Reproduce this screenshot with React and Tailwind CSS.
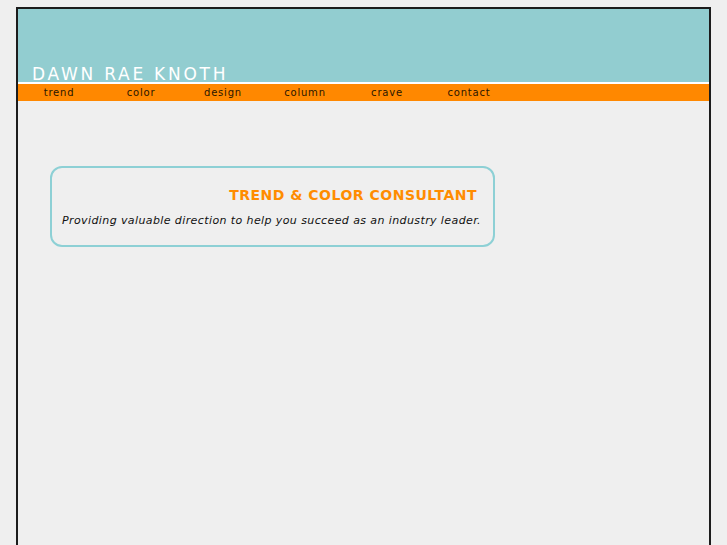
import React from 'react';

const navItems = ['trend', 'color', 'design', 'column', 'crave', 'contact'];

const App = () => {
  return (
    <div className="min-h-[545px] bg-[#efefef] pt-[7px] pl-[16px] font-['DejaVu_Sans',sans-serif]">
      <div className="w-[695px] min-h-[540px] border-2 border-b-0 border-[#1c1c1c] bg-[#efefef]">
        {/* Header */}
        <div className="h-[73px] bg-[#92cdd0] flex items-end pl-[14px]">
          <h1 className="text-white text-[17px] leading-none tracking-[2.75px] font-normal mb-[-1px]">
            DAWN RAE KNOTH
          </h1>
        </div>
        <div className="h-[2px] bg-white" />

        {/* Nav */}
        <nav className="h-[17px] bg-[#ff8800] flex items-center">
          {navItems.map((item) => (
            <a
              key={item}
              href="#"
              className="w-[82px] text-center text-[10px] leading-none tracking-[0.8px] text-[#2a1600]"
            >
              {item}
            </a>
          ))}
        </nav>

        {/* Intro box */}
        <div className="pt-[65px] pl-[32px]">
          <div className="w-[445px] h-[81px] border-2 border-[#8dd0d5] rounded-[12px] pt-[20px] pr-[16px] pl-[10px]">
            <h2 className="text-right text-[14px] leading-none font-bold tracking-[0.5px] text-[#ff8c00]">
              TREND &amp; COLOR CONSULTANT
            </h2>
            <p className="mt-[13px] mr-[-4px] text-right whitespace-nowrap text-[11px] leading-none italic tracking-[0.4px] text-[#111]">
              Providing valuable direction to help you succeed as an industry leader.
            </p>
          </div>
        </div>
      </div>
    </div>
  );
};

export default App;
